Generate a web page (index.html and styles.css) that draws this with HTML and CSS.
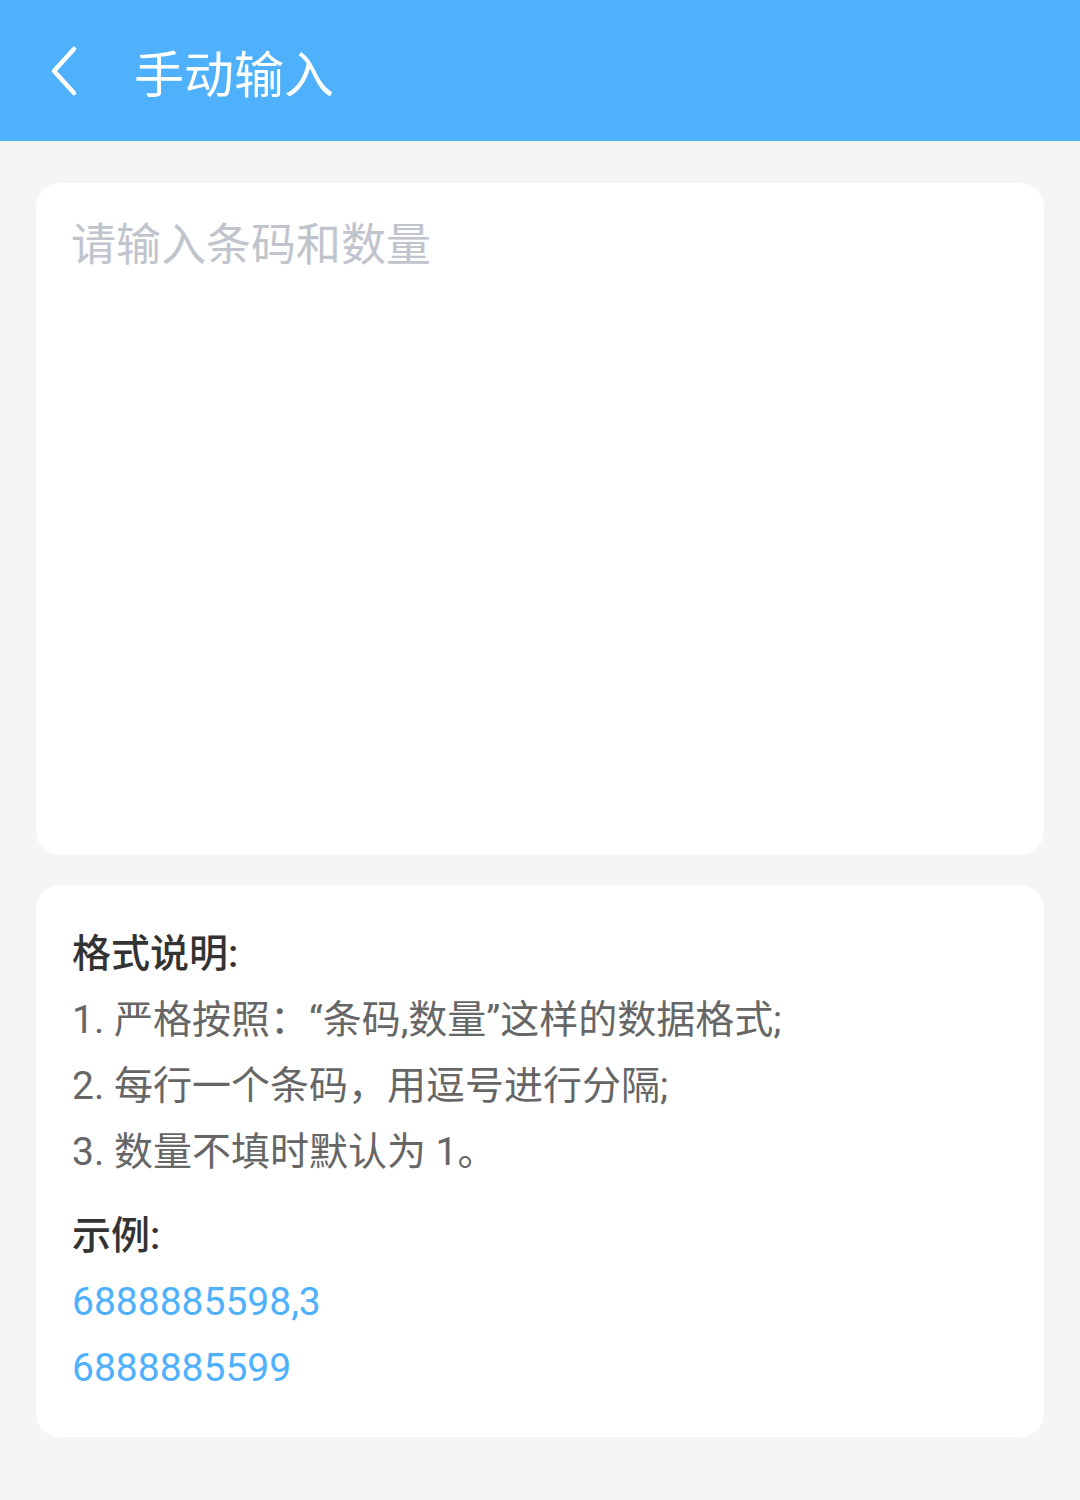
FILE: index.html
```
<!DOCTYPE html>
<html>
<head>
    <meta charset="utf-8">
    <title>手动输入</title>
    <link rel="stylesheet" href="styles.css">
</head>
<body>
    <div class="topnav">
        <svg class="back" width="40" height="60" viewBox="0 0 40 60">
            <path d="M28 8 L8 30 L28 52" fill="none" stroke="#fff" stroke-width="4.5" stroke-linecap="round" stroke-linejoin="round"/>
        </svg>
        <h1>手动输入</h1>
    </div>
    <div class="content">
        <div class="card input-card">
            <textarea class="codes" placeholder="请输入条码和数量"></textarea>
        </div>
        <div class="card help">
            <p class="label">格式说明:</p>
            <p>1. 严格按照：“条码,数量”这样的数据格式;</p>
            <p>2. 每行一个条码，用逗号进行分隔;</p>
            <p>3. 数量不填时默认为 1。</p>
            <p class="label example">示例:</p>
            <p class="num">6888885598,3</p>
            <p class="num">6888885599</p>
        </div>
    </div>
</body>
</html>
```

FILE: styles.css
```
html {
    font-family: Roboto, "Noto Sans CJK SC", sans-serif;
}

body {
    margin: 0;
    background-color: #f5f5f5;
}

.topnav {
    height: 141px;
    background-color: #4fb1fc;
    display: flex;
    align-items: center;
    padding-left: 46px;
}

.back {
    display: block;
}

h1 {
    margin: 0 0 0 48px;
    font-size: 50px;
    font-weight: normal;
    color: white;
}

.content {
    padding: 42px 36px;
}

.card {
    background-color: #fff;
    border-radius: 24px;
}

.input-card {
    height: 672px;
    padding: 0 35px;
    box-sizing: border-box;
    margin-bottom: 30px;
}

.codes {
    display: block;
    width: 100%;
    height: 100%;
    border: none;
    outline: none;
    resize: none;
    padding: 32px 0 0;
    margin: 0;
    font-family: inherit;
    font-size: 45px;
    line-height: 62px;
    color: #333;
    background: transparent;
}

.codes::placeholder {
    color: #c0c4cc;
}

.help {
    padding: 36px 36px 36px;
}

.help p {
    margin: 0;
    font-size: 39px;
    line-height: 66px;
    color: #666;
}

.help .label {
    color: #333;
    font-weight: 500;
}

.help .example {
    margin-top: 18px;
}

.help .num {
    color: #4fb1fc;
}
```
